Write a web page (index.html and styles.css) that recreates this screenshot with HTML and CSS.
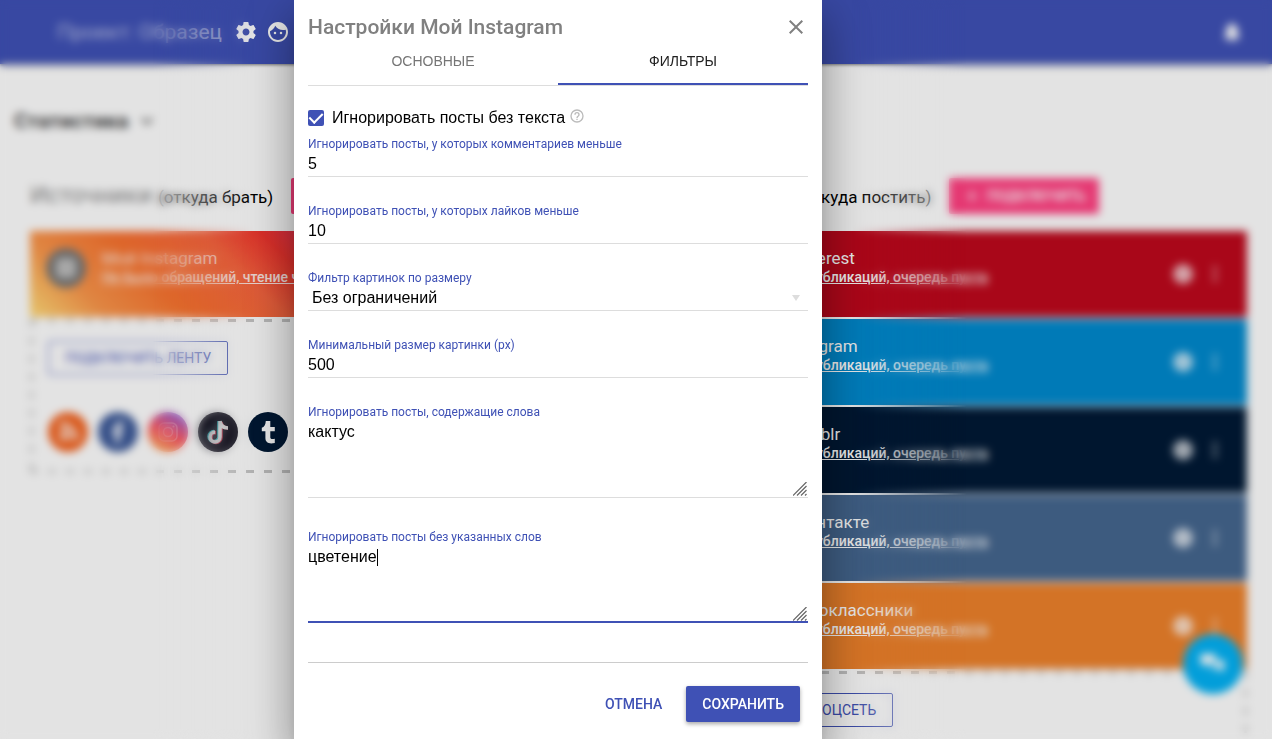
FILE: index.html
```html
<!DOCTYPE html>
<html lang="ru">
<head>
<meta charset="utf-8">
<title>Настройки Мой Instagram</title>
<link rel="stylesheet" href="styles.css">
</head>
<body>
<svg class="sprite" aria-hidden="true">
  <symbol id="i-plus" viewBox="0 0 24 24"><path d="M19 13h-6v6h-2v-6H5v-2h6V5h2v6h6z"/></symbol>
  <symbol id="i-more" viewBox="0 0 24 24"><path d="M12 8a2 2 0 1 0 0-4 2 2 0 0 0 0 4zm0 2a2 2 0 1 0 0 4 2 2 0 0 0 0-4zm0 6a2 2 0 1 0 0 4 2 2 0 0 0 0-4z"/></symbol>
  <symbol id="i-grip" viewBox="0 0 14 14"><path d="M0 13.5 13.5 0M4 13.5 13.5 4M8 13.5 13.5 8M12 13.5l1.500-1.500" fill="none" stroke="#666" stroke-width="1.200"/></symbol>
  <symbol id="i-info" viewBox="0 0 24 24"><path d="M12 2a10 10 0 1 0 0 20 10 10 0 0 0 0-20z"/></symbol>
</svg>

<div class="page">
  <header class="topbar">
    <span class="project">Проект: Образец</span>
    <button class="icon-button" aria-label="Настройки проекта"><svg viewBox="0 0 24 24"><path d="M19.430 12.980c.04-.32.07-.64.07-.98s-.03-.66-.07-.98l2.110-1.650c.19-.15.24-.42.12-.64l-2-3.460c-.12-.22-.39-.3-.61-.22l-2.490 1c-.52-.4-1.080-.73-1.690-.98l-.38-2.650A.488.488 0 0 0 14 2h-4c-.25 0-.46.18-.49.42l-.38 2.650c-.61.25-1.170.59-1.690.98l-2.490-1c-.23-.09-.49 0-.61.22l-2 3.460c-.13.22-.07.49.12.64l2.110 1.650c-.04.32-.07.65-.07.98s.03.66.07.98l-2.110 1.650c-.19.15-.24.42-.12.64l2 3.460c.12.22.39.3.61.22l2.490-1c.52.4 1.080.73 1.690.98l.38 2.650c.03.24.24.42.49.42h4c.25 0 .46-.18.49-.42l.38-2.650c.61-.25 1.170-.59 1.690-.98l2.490 1c.23.09.49 0 .61-.22l2-3.460c.12-.22.07-.49-.12-.64l-2.110-1.650zM12 15.500c-1.930 0-3.500-1.570-3.500-3.500s1.570-3.500 3.500-3.500 3.500 1.570 3.500 3.500-1.570 3.500-3.500 3.500z"/></svg></button>
    <button class="icon-button" aria-label="Профиль"><svg viewBox="0 0 24 24"><path d="M9 11.750a1.250 1.250 0 1 0 0 2.500 1.250 1.250 0 0 0 0-2.500zm6 0a1.250 1.250 0 1 0 0 2.500 1.250 1.250 0 0 0 0-2.500zM12 2C6.480 2 2 6.480 2 12s4.480 10 10 10 10-4.480 10-10S17.520 2 12 2zm0 18c-4.410 0-8-3.590-8-8 0-.29.02-.58.05-.86 2.360-1.050 4.230-2.980 5.210-5.370a9.974 9.974 0 0 0 10.410 3.970c.21.710.33 1.470.33 2.260 0 4.410-3.590 8-8 8z"/></svg></button>
    <button class="icon-button bell" aria-label="Уведомления"><svg viewBox="0 0 24 24"><path d="M12 22a2 2 0 0 0 2-2h-4a2 2 0 0 0 2 2zm6-6v-5c0-3.070-1.640-5.640-4.500-6.320V4a1.500 1.500 0 0 0-3 0v.68C7.630 5.360 6 7.920 6 11v5l-2 2v1h16v-1z"/></svg></button>
  </header>

  <main class="content">
    <h2 class="stats">Статистика <svg viewBox="0 0 24 24"><path d="M16.590 8.590 12 13.170 7.410 8.590 6 10l6 6 6-6z"/></svg></h2>
    <div class="columns">
      <section>
        <div class="heading"><h3>Источники <small>(откуда брать)</small></h3><button class="raised pink"><svg><use href="#i-plus"/></svg>ПОДКЛЮЧИТЬ</button></div>
        <div class="cards">
          <article class="card instagram">
            <svg class="avatar" viewBox="0 0 40 40"><circle cx="20" cy="20" r="20" fill="#777"/><rect x="10" y="10" width="20" height="20" rx="5" fill="#bbb"/></svg>
            <div class="info"><span class="name">Мой Instagram</span><a href="#">Не было обращений, чтение через час</a></div>
          </article>
          <div class="panel">
            <button class="outlined">ПОДКЛЮЧИТЬ ЛЕНТУ</button>
            <div class="networks">
              <svg viewBox="0 0 40 40"><circle cx="20" cy="20" r="20" fill="#f26522"/><g fill="none" stroke="#fff" stroke-width="3.500"><path d="M12 19a9 9 0 0 1 9 9M12 12a16 16 0 0 1 16 16"/></g><circle cx="14" cy="26" r="2.500" fill="#fff"/></svg>
              <svg viewBox="0 0 40 40"><circle cx="20" cy="20" r="20" fill="#3b5998"/><path fill="#fff" d="M21.500 31V21.300h3.300l.5-3.800h-3.800v-2.400c0-1.100.3-1.900 1.900-1.900h2V9.800c-.4 0-1.600-.1-3-.1-2.900 0-4.900 1.800-4.900 5v2.800h-3.300v3.800h3.300V31z"/></svg>
              <svg viewBox="0 0 40 40"><defs><linearGradient id="ig" x1=".2" y1="1" x2=".7" y2="0"><stop offset="0" stop-color="#ffad50"/><stop offset=".5" stop-color="#f84a58"/><stop offset="1" stop-color="#8c52cf"/></linearGradient></defs><circle cx="20" cy="20" r="20" fill="url(#ig)"/><g fill="none" stroke="#f5c5cf" stroke-width="1.500"><rect x="11" y="11" width="18" height="18" rx="5"/><circle cx="20" cy="20" r="4.500"/></g><circle cx="25.500" cy="14.500" r="1" fill="#f5c5cf"/></svg>
              <svg viewBox="0 0 40 40"><circle cx="20" cy="20" r="20" fill="#1b1a27"/><g fill="none" stroke-width="3.500"><path stroke="#45d8dc" d="M21 9v15.500a5 5 0 1 1-5-5"/><path stroke="#d84a62" d="M23 10v15.500a5 5 0 1 1-5-5M23 10c.5 4 3 6 7 6"/><path stroke="#fff" d="M22 9v16a5 5 0 1 1-5-5M22 9c.5 4.500 3.500 7 8 7"/></g></svg>
              <svg viewBox="0 0 40 40"><circle cx="20" cy="20" r="20" fill="#001935"/><path fill="#fff" d="M17.800 9h4.500v6h4.500v4.300h-4.500v6c0 1.700 1.200 2.200 4.500 1.500v4.200c-5.400 1.200-9.400 0-9.400-4.900v-6.800h-3.600v-3.600c2.400-.8 3.800-2.700 4-6.700z"/></svg>
            </div>
          </div>
        </div>
      </section>
      <section>
        <div class="heading"><h3>Получатели <small>(куда постить)</small></h3><button class="raised pink"><svg><use href="#i-plus"/></svg>ПОДКЛЮЧИТЬ</button></div>
        <div class="cards">
          <article class="card pinterest"><span class="avatar dot"></span><div class="info"><span class="name">Мой Pinterest</span><a href="#">Не было публикаций, очередь пуста</a></div><svg><use href="#i-info"/></svg><svg><use href="#i-more"/></svg></article>
          <article class="card telegram"><span class="avatar dot"></span><div class="info"><span class="name">Мой Telegram</span><a href="#">Не было публикаций, очередь пуста</a></div><svg><use href="#i-info"/></svg><svg><use href="#i-more"/></svg></article>
          <article class="card tumblr"><span class="avatar dot"></span><div class="info"><span class="name">Мой Tumblr</span><a href="#">Не было публикаций, очередь пуста</a></div><svg><use href="#i-info"/></svg><svg><use href="#i-more"/></svg></article>
          <article class="card vk"><span class="avatar dot"></span><div class="info"><span class="name">Мой Вконтакте</span><a href="#">Не было публикаций, очередь пуста</a></div><svg><use href="#i-info"/></svg><svg><use href="#i-more"/></svg></article>
          <article class="card ok"><span class="avatar dot"></span><div class="info"><span class="name">Мой Одноклассники</span><a href="#">Не было публикаций, очередь пуста</a></div><svg><use href="#i-info"/></svg><svg><use href="#i-more"/></svg></article>
          <div class="panel open"><button class="outlined">ПОДКЛЮЧИТЬ СОЦСЕТЬ</button></div>
        </div>
      </section>
    </div>
  </main>
  <button class="chat" aria-label="Чат"><svg viewBox="0 0 24 24"><path d="M2 4h12v8H8l-3 3v-3H2zM15 9h6v7h-1v3l-3-3h-7v-2h5z"/></svg></button>
</div>

<div class="scrim"></div>
<div class="haze"></div>

<div class="overlay">
  <form class="dialog" role="dialog" aria-labelledby="dialog-title">
    <div class="dialog-head">
      <h1 id="dialog-title">Настройки Мой Instagram</h1>
      <button type="button" class="close" aria-label="Закрыть"><svg viewBox="0 0 24 24"><path d="M19 6.410 17.590 5 12 10.590 6.410 5 5 6.410 10.590 12 5 17.590 6.410 19 12 13.410 17.590 19 19 17.590 13.410 12z"/></svg></button>
    </div>
    <div class="tabs" role="tablist">
      <button type="button" role="tab" aria-selected="false">ОСНОВНЫЕ</button>
      <button type="button" role="tab" aria-selected="true">ФИЛЬТРЫ</button>
    </div>
    <div class="check">
      <input type="checkbox" id="no-text" checked>
      <label for="no-text">Игнорировать посты без текста</label>
      <svg viewBox="0 0 24 24" aria-label="Помощь"><path d="M11 18h2v-2h-2zm1-16a10 10 0 1 0 0 20 10 10 0 0 0 0-20zm0 18a8 8 0 1 1 0-16 8 8 0 0 1 0 16zm0-14a4 4 0 0 0-4 4h2a2 2 0 1 1 4 0c0 2-3 1.750-3 5h2c0-2.250 3-2.500 3-5a4 4 0 0 0-4-4z"/></svg>
    </div>
    <div class="field"><label for="comments">Игнорировать посты, у которых комментариев меньше</label><input type="text" id="comments" value="5"></div>
    <div class="field"><label for="likes">Игнорировать посты, у которых лайков меньше</label><input type="text" id="likes" value="10"></div>
    <div class="field select"><label for="size">Фильтр картинок по размеру</label><select id="size"><option>Без ограничений</option></select></div>
    <div class="field"><label for="min-size">Минимальный размер картинки (px)</label><input type="text" id="min-size" value="500"></div>
    <div class="field area"><label for="stop-words">Игнорировать посты, содержащие слова</label><textarea id="stop-words">кактус</textarea><svg class="grip"><use href="#i-grip"/></svg></div>
    <div class="field area active"><label for="need-words">Игнорировать посты без указанных слов</label><textarea id="need-words">цветение</textarea><span class="caret"></span><svg class="grip"><use href="#i-grip"/></svg></div>
    <div class="actions">
      <button type="button" class="flat">ОТМЕНА</button>
      <button type="submit" class="raised save">СОХРАНИТЬ</button>
    </div>
  </form>
</div>
</body>
</html>
```
FILE: styles.css
```css
* { box-sizing: border-box; }
body { margin: 0; height: 100vh; overflow: hidden; background: #fdfdfd; color: #000; font-family: Roboto, sans-serif; font-size: 16px; }
h1, h2, h3 { margin: 0; font-weight: 500; }
button, input, select, textarea { font: inherit; color: inherit; margin: 0; padding: 0; border: 0; border-radius: 0; background: none; outline: 0; }
svg { display: block; fill: currentColor; flex: none; }
.sprite { display: none; }

.topbar { display: flex; align-items: center; gap: 8px; height: 64px; padding: 0 28px 0 57px; background: #3f51b5; color: #fff; box-shadow: 0 1px 3px rgba(0, 0, 0, .5); }
.project { margin-right: 4px; font-size: 21px; opacity: .6; }
.icon-button { width: 24px; height: 24px; }
.bell { margin-left: auto; }

.content { padding: 42px 25px 0 30px; }
.stats { display: flex; align-items: center; gap: 6px; margin: 0 0 42px -16px; color: #444; font-size: 21px; font-weight: 700; line-height: 30px; }
.stats svg { width: 24px; height: 24px; }
.columns { display: grid; grid-template-columns: 1fr 1fr; gap: 76px; }
.heading { display: flex; align-items: center; gap: 18px; height: 36px; margin-bottom: 17px; }
.heading h3 { color: #888; font-size: 24px; font-weight: 400; line-height: 36px; white-space: nowrap; }
.heading small { color: #000; font-size: 17px; }
.raised { display: flex; align-items: center; justify-content: center; height: 36px; padding: 0 16px; border-radius: 2px; color: #fff; font-size: 14px; font-weight: 500; box-shadow: 0 2px 4px rgba(0, 0, 0, .35); }
.pink { gap: 6px; width: 150px; padding: 0; background: #ff4081; box-shadow: none; }
.pink svg { width: 18px; height: 18px; }

.cards { display: grid; gap: 2px; }
.card { display: flex; align-items: center; gap: 8px; height: 86px; padding: 0 20px 0 16px; color: #fff; }
.card > svg { width: 24px; height: 24px; opacity: .7; }
.card > .avatar { align-self: flex-start; width: 40px; height: 40px; margin: 17px 8px 0 0; opacity: 1; }
.dot { border-radius: 50%; background: #eee; }
.info { display: grid; flex: 1; align-self: flex-start; padding-top: 17px; white-space: nowrap; }
.name { font-size: 17px; line-height: 20px; }
.info a { color: inherit; font-size: 14px; font-weight: 500; line-height: 18px; }
.instagram { background: linear-gradient(45deg, #ffdb78, #f9954a 12%, #f7722f 25%, #f5653f 39%, #f0352e 48%, #c32aa3 75%); }
.instagram .name, .instagram a { opacity: .85; }
.pinterest { background: #bd081c; }
.telegram { background: #08c; }
.tumblr { background: #001935; }
.vk { background: #45668e; }
.ok { background: #eb812b; }

.panel {
  padding: 22px 18px 18px;
  background:
    repeating-linear-gradient(90deg, #c4c4c4 0 8px, transparent 8px 18px) top / 100% 3px no-repeat,
    repeating-linear-gradient(90deg, #c4c4c4 0 8px, transparent 8px 18px) bottom / 100% 3px no-repeat,
    repeating-linear-gradient(#c4c4c4 0 8px, transparent 8px 18px) left / 3px 100% no-repeat,
    repeating-linear-gradient(#c4c4c4 0 8px, transparent 8px 18px) right / 3px 100% no-repeat;
}
.open { padding-bottom: 12px; background-size: 100% 3px, 0 0, 3px 100%, 3px 100%; }
.outlined { height: 34px; padding: 0 16px; border: 1px solid #3f51b5; border-radius: 2px; color: #3f51b5; font-size: 14px; font-weight: 400; }
.networks { display: flex; gap: 10px; margin: 37px 0 3px; }
.networks svg { width: 40px; height: 40px; }
.chat { position: fixed; right: 29px; bottom: 45px; display: grid; place-items: center; width: 60px; height: 60px; border-radius: 50%; background: #03b0f3; color: #fff; }
.chat svg { width: 30px; height: 30px; }

.scrim, .haze, .overlay { position: fixed; inset: 0; }
.scrim { background: rgba(0, 0, 0, .1); }
.haze { backdrop-filter: blur(4px); mask-image: linear-gradient(90deg, #000 12%, transparent 20%, transparent 67%, #000 76%); }

.overlay { display: flex; justify-content: center; padding-right: 156px; }
.dialog { flex: 0 1 528px; padding: 15px 14px 0; background: #fff; box-shadow: 0 11px 15px -7px rgba(0, 0, 0, .2), 0 24px 38px 3px rgba(0, 0, 0, .24), 0 9px 46px 8px rgba(0, 0, 0, .12); }
.dialog-head { display: flex; justify-content: space-between; color: #808080; }
.dialog-head h1 { font-size: 21px; line-height: 24px; }
.close { width: 24px; height: 24px; }
.tabs { display: grid; grid-template-columns: 1fr 1fr; border-bottom: 1px solid #ddd; }
.tabs button { height: 46px; border-bottom: 2px solid transparent; color: #757575; font-family: "Liberation Sans", sans-serif; font-size: 14px; }
.tabs button[aria-selected="true"] { border-color: #3f51b5; color: #212121; }

.check { display: flex; align-items: center; height: 24px; margin: 20px 0 6px; font-family: "Liberation Sans", sans-serif; }
.check input { display: grid; place-items: center; appearance: none; width: 16px; height: 16px; margin-right: 8px; border-radius: 2px; background: #3f51b5; }
.check input:checked::after { content: ""; width: 6px; height: 11px; margin-bottom: 3px; border: solid #fff; border-width: 0 2px 2px 0; transform: rotate(45deg); }
.check svg { width: 16px; height: 16px; margin: 0 0 4px 4px; color: #bbb; }

.field { position: relative; display: grid; margin-bottom: 26px; }
.field label { color: #3f51b5; font-size: 12px; line-height: 16px; }
.field input, .field select, .field textarea { width: 100%; height: 25px; border-bottom: 1px solid #ddd; font-family: "Liberation Sans", sans-serif; line-height: 24px; }
.field select { appearance: none; padding-left: 4px; }
.select::after { content: ""; position: absolute; right: 8px; bottom: 10px; border: 4px solid transparent; border-top: 6px solid #ddd; border-bottom: 0; }
.area { margin-bottom: 31px; }
.field textarea { display: block; height: 78px; resize: none; }
.active { margin-bottom: 0; }
.active textarea { border-bottom: 2px solid #3f51b5; }
.grip { position: absolute; right: 1px; bottom: 2px; width: 14px; height: 14px; }
.caret { position: absolute; left: 69px; top: 20px; width: 1px; height: 17px; background: #000; }

.actions { display: flex; justify-content: flex-end; gap: 8px; margin-top: 39px; padding: 23px 8px 17px; border-top: 1px solid #ccc; }
.flat { padding: 0 16px; color: #3f51b5; font-size: 14px; font-weight: 500; }
.save { min-width: 112px; background: #3f51b5; font-size: 14px; }
```
